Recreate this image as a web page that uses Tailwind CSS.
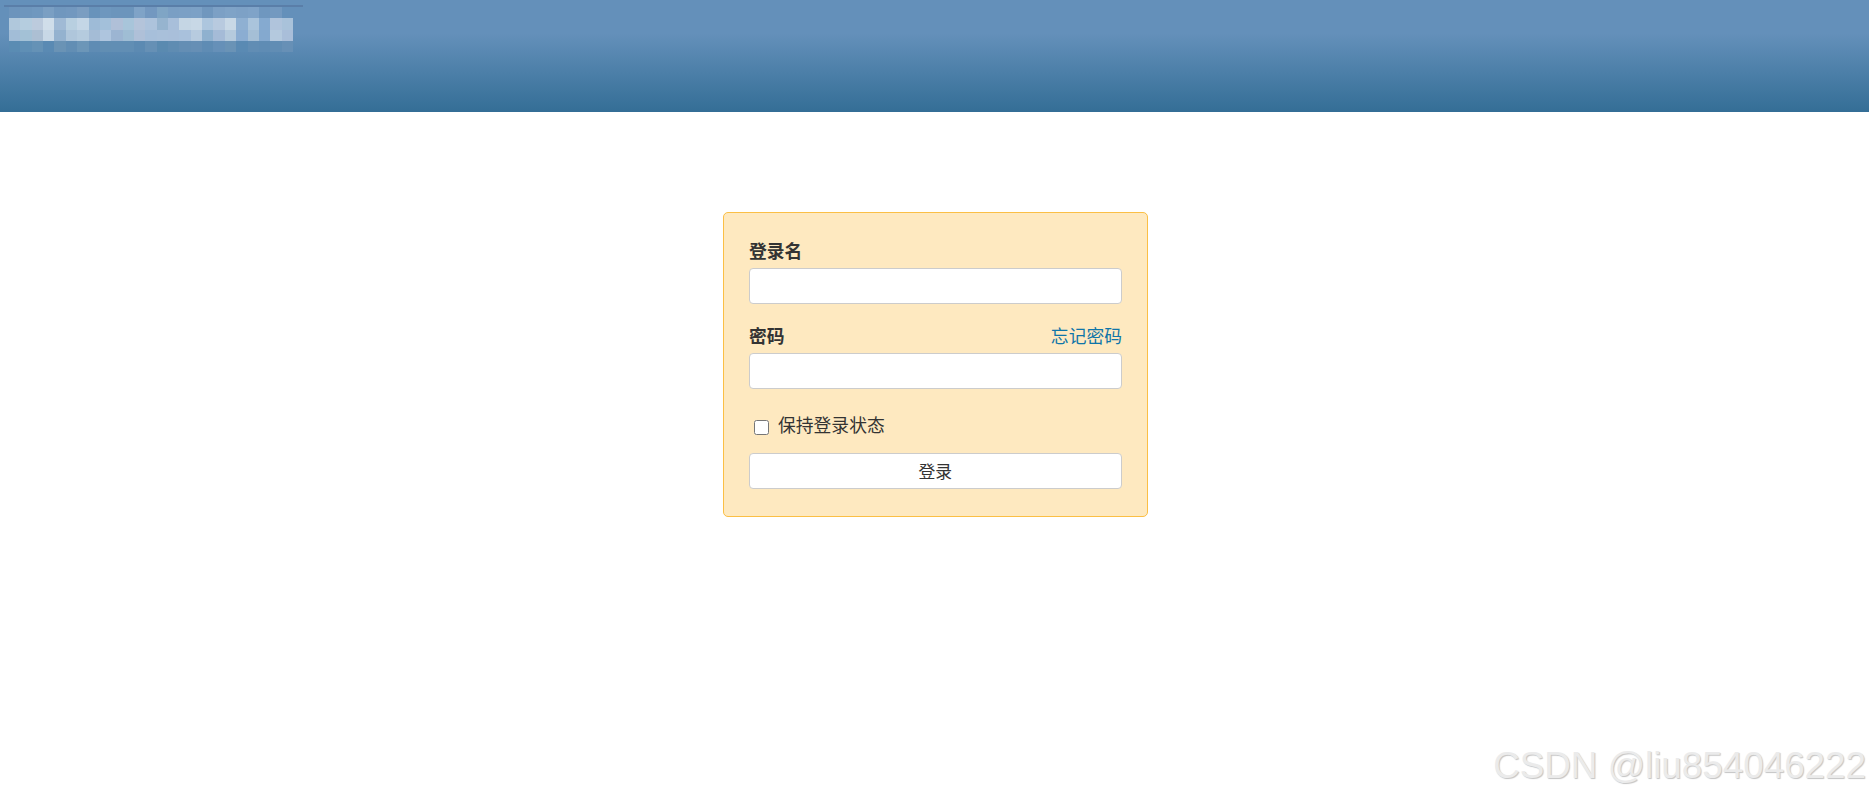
<!DOCTYPE html>
<html lang="zh-CN">
<head>
  <meta charset="UTF-8">
  <title>登录</title>
  <script src="https://cdn.jsdelivr.net/npm/@tailwindcss/browser@4"></script>
</head>
<body class="bg-white text-[#333] font-['Liberation_Sans','Noto_Sans_CJK_SC',sans-serif] h-[799px] overflow-hidden relative">
  <header class="h-[112px] bg-[linear-gradient(#6490ba_0%,#6490ba_30%,#346e96_100%)] pt-[5px]">
    <div class="ml-[4px] w-[299px] h-[2px] bg-[#5a7ea8]"></div>
    <!-- blurred site title, mosaic -->
    <div id="mosaic" class="ml-[9px] grid grid-cols-[repeat(25,11.36px)] auto-rows-[11.25px]"></div>
  </header>

  <main class="w-[425px] ml-[723px] mt-[100px] bg-[#fee9c0] border border-[#fbbf45] rounded-[5px] pl-[25px] pr-[25.5px] pt-[26px] pb-[27px]">
    <form>
      <label class="block h-[25px] leading-[26px] text-[17.8px] font-bold text-[#333] mb-[4px]">登录名</label>
      <input type="text" class="block w-full h-[36px] bg-white border border-[#ccc] rounded-[4px]">

      <div class="flex justify-between h-[25px] leading-[26px] text-[17.8px] mt-[20px] mb-[4px] -mr-[0.5px]">
        <label class="font-bold text-[#333]">密码</label>
        <a href="#" class="text-[#0f75a8]">忘记密码</a>
      </div>
      <input type="password" class="block w-full h-[36px] bg-white border border-[#ccc] rounded-[4px]">

      <label class="flex items-center h-[26px] mt-[25px] mb-[13px] pl-[5px] gap-[10px] text-[17.8px] text-[#333]">
        <input type="checkbox" class="w-[15px] h-[15px] m-0">
        <span class="-mt-[2px] -ml-[1px]">保持登录状态</span>
      </label>
      <button type="button" class="block w-full h-[36px] pt-[3px] bg-white border border-[#ccc] rounded-[4px] text-[16.8px] text-[#333]">登录</button>
    </form>
  </main>

  <div class="absolute right-[3px] top-[746px] text-[36.8px] leading-[40px] whitespace-nowrap text-[#ebebeb] [text-shadow:1px_1px_1px_#c4c4c4]">CSDN @liu854046222</div>

  <script>
    const rows = [
      ["#6c94bc","#6e96bd","#7098bf","#7a9fc3","#7097be","#7298bf","#7a9dc1","#6893bb","#6e97be","#6c95bc","#6c95bc","#7fa3c7","#7398c0","#7fa5c5","#7a9fc4","#7ba0c5","#7ca1c6","#7097be","#7ca0c5","#7fa3c7","#7da1c6","#7fa3c8","#6f97bf","#7399c0","#6490ba"],
      ["#b0c8dc","#b5cddf","#bccbdd","#d0deea","#a0bad5","#b8cfe0","#c4d6e6","#9ebbd7","#a3c0da","#b0c0d8","#a8c5da","#b4c4da","#adc3dc","#96b4cf","#a8bfda","#c5d6e4","#c8d8e6","#adc6de","#b8cadf","#c8d8e6","#8fb0d2","#aac4dc","#85aad0","#b0c4dc","#a9c2da"],
      ["#a2bdd7","#a3c1d6","#acbfd3","#c8d8e6","#94b2cf","#afc6db","#b5cbde","#a4bcd6","#aec5de","#9cb5d2","#9fbdd4","#afc0d8","#a7bfda","#a9c0da","#a9bfda","#a9c1dc","#b7cbdf","#8fb1cf","#a5bbd7","#b5cadd","#8badd2","#a5bfd6","#84a9cf","#b4c9de","#a9bed9"],
      ["#5a8cb3","#5f8fb5","#6592b6","#5a8ab3","#6a93b5","#628eb4","#6c96b8","#5f8cb4","#618eb3","#618eb4","#618eb4","#5c8ab2","#6690b5","#5a8ab0","#5f8cb2","#648eb4","#668fb5","#5f8cb4","#6690b8","#6a93b6","#5a8ab3","#618db4","#5f8cb4","#618db4","#6790b6"]
    ];
    const mosaic = document.getElementById("mosaic");
    rows.flat().forEach(c => {
      const cell = document.createElement("div");
      cell.style.backgroundColor = c;
      mosaic.appendChild(cell);
    });
  </script>
</body>
</html>
